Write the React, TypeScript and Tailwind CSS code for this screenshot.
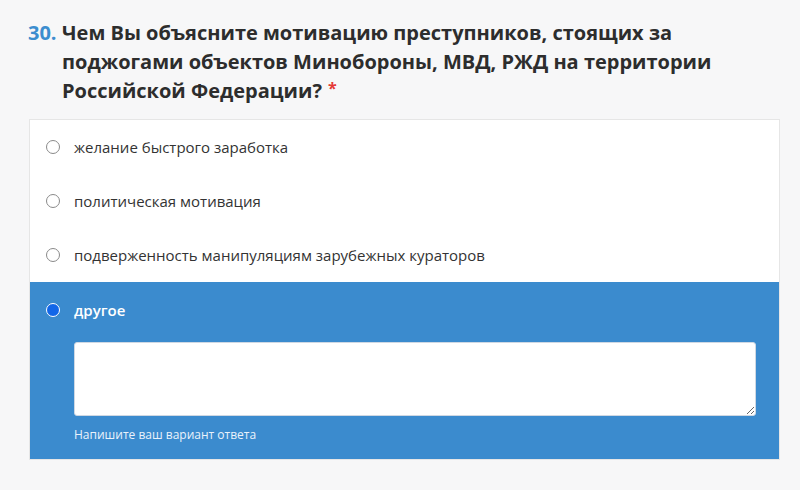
const options = [
  'желание быстрого заработка',
  'политическая мотивация',
  'подверженность манипуляциям зарубежных кураторов',
]

export default function App() {
  return (
    <div className="h-[490px] w-[800px] bg-[#f7f7f8] pt-[18px] font-['Open_Sans',sans-serif]">
      <div className="flex pl-[28px] pr-[40px]">
        <span className="w-[34px] shrink-0 text-[20px] leading-[29px] font-bold text-[#3c8dcf]">30.</span>
        <h2 className="text-[20px] leading-[29px] font-bold text-[#2d2d2d]">
          Чем Вы объясните мотивацию преступников, стоящих за поджогами объектов Минобороны, МВД, РЖД на территории
          Российской Федерации?
          <span className="ml-[6px] align-top text-[16px] leading-[24px] text-[#e53935]">*</span>
        </h2>
      </div>

      <div className="mt-[14px] ml-[29px] mr-[20px] border border-[#e6e6e6] bg-white">
        <div>
          {options.map((option) => (
            <label key={option} className="flex h-[54px] items-center gap-[14px] pl-[16px] text-[15px] font-medium text-[#333]">
              <span className="h-[14px] w-[14px] rounded-full border border-[#8a8a8a] bg-white" />
              {option}
            </label>
          ))}
        </div>

        <div className="bg-[#3b8bce] pt-[17px] pb-[15px] pl-[16px] pr-[23px] text-white">
          <label className="flex items-center gap-[14px] text-[15px] font-semibold">
            <span className="h-[14px] w-[14px] rounded-full border border-white bg-[#1166e8]" />
            другое
          </label>
          <div className="mt-[20px] pl-[28px]">
            <textarea className="block h-[74px] w-full resize-y rounded-[3px] border border-[#cfd8e3] bg-white p-2 text-sm text-[#333] outline-none" />
            <p className="mt-[10px] text-[12px] font-medium text-[#eaf2fb]">Напишите ваш вариант ответа</p>
          </div>
        </div>
      </div>
    </div>
  )
}
